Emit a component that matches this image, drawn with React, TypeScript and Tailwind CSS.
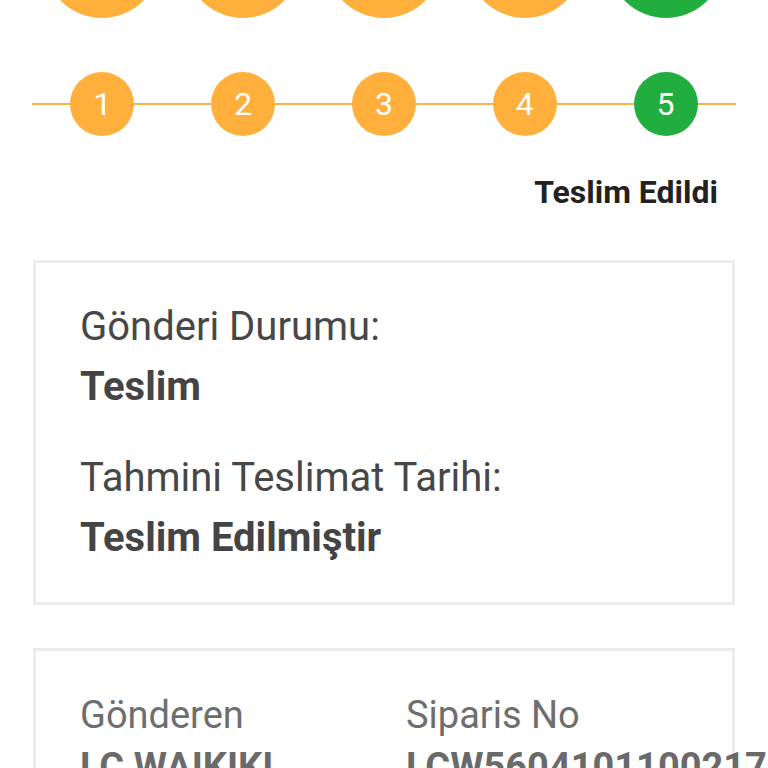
import React from "react";

const steps = [
  { n: 1, done: false },
  { n: 2, done: false },
  { n: 3, done: false },
  { n: 4, done: false },
  { n: 5, done: true },
];

export default function App() {
  return (
    <div
      className="w-[768px] h-[768px] overflow-hidden bg-white"
      style={{ fontFamily: "Roboto, 'Noto Sans', Arial, sans-serif" }}
    >
      {/* partially visible top stepper */}
      <div className="h-[18px] overflow-hidden px-[32px] grid grid-cols-5 items-end">
        {steps.map((s) => (
          <div key={s.n} className="flex justify-center items-end h-[18px]">
            <div
              className={`w-[116px] h-[116px] shrink-0 rounded-full ${
                s.done ? "bg-[#22ae3e]" : "bg-[#ffb03c]"
              }`}
            />
          </div>
        ))}
      </div>

      {/* stepper */}
      <div className="relative mx-[32px] mt-[54px] h-[64px] grid grid-cols-5">
        <div className="absolute left-0 right-0 top-[31px] h-[2px] bg-[#f7b04a]" />
        {steps.map((s) => (
          <div key={s.n} className="relative flex justify-center">
            <div
              className={`w-[64px] h-[64px] rounded-full flex items-center justify-center text-white text-[32px] leading-none ${
                s.done ? "bg-[#22ae3e]" : "bg-[#ffb03c]"
              }`}
            >
              {s.n}
            </div>
          </div>
        ))}
      </div>

      <div className="mt-[36px] pr-[50px] text-right text-[32px] leading-[40px] font-bold text-[#222222]">
        Teslim Edildi
      </div>

      {/* card 1 */}
      <div className="mt-[48px] mx-[33px] border-[3px] border-[#ececec] pt-[34px] pb-[34px] px-[44px]">
        <div className="text-[40px] leading-[60px] text-[#474747]">Gönderi Durumu:</div>
        <div className="text-[40px] leading-[60px] font-bold text-[#444444]">Teslim</div>
        <div className="mt-[31px] text-[40px] leading-[60px] text-[#474747]">
          Tahmini Teslimat Tarihi:
        </div>
        <div className="text-[40px] leading-[60px] font-bold text-[#444444]">
          Teslim Edilmiştir
        </div>
      </div>

      {/* card 2 */}
      <div className="mt-[43px] mx-[33px] border-[3px] border-[#ececec] pt-[38px] pb-[34px] pl-[44px] grid grid-cols-[326px_1fr]">
        <div>
          <div className="text-[38px] leading-[52px] text-[#6e6e6e]">Gönderen</div>
          <div className="text-[38px] leading-[52px] font-bold text-[#6a6a6a] whitespace-nowrap">
            LC WAIKIKI
          </div>
        </div>
        <div>
          <div className="text-[38px] leading-[52px] text-[#6e6e6e]">Siparis No</div>
          <div className="text-[38px] leading-[52px] font-bold text-[#6a6a6a] whitespace-nowrap">
            LCW560410110021734
          </div>
        </div>
      </div>
    </div>
  );
}
